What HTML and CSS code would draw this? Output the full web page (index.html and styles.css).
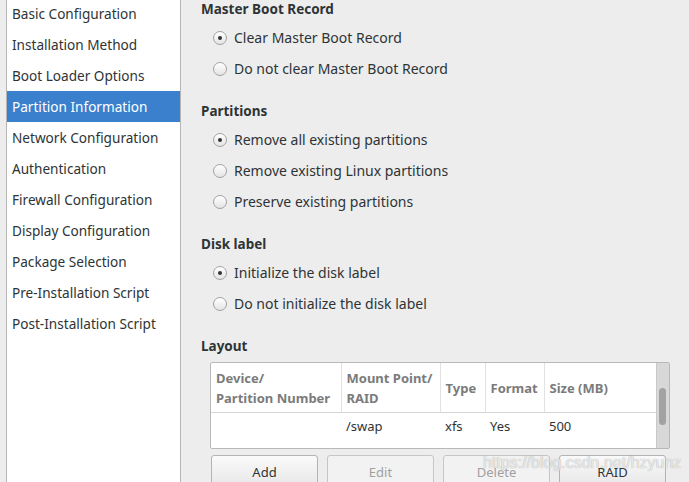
FILE: index.html
```html
<!DOCTYPE html>
<html>
<head>
<meta charset="utf-8">
<link rel="stylesheet" href="styles.css">
</head>
<body>
<div class="app">
  <nav class="sidebar">
    <ul class="nav-list">
      <li class="nav-item">Basic Configuration</li>
      <li class="nav-item">Installation Method</li>
      <li class="nav-item">Boot Loader Options</li>
      <li class="nav-item selected">Partition Information</li>
      <li class="nav-item">Network Configuration</li>
      <li class="nav-item">Authentication</li>
      <li class="nav-item">Firewall Configuration</li>
      <li class="nav-item">Display Configuration</li>
      <li class="nav-item">Package Selection</li>
      <li class="nav-item">Pre-Installation Script</li>
      <li class="nav-item">Post-Installation Script</li>
    </ul>
  </nav>
  <main class="content">
    <section class="group">
      <h2 class="group-title">Master Boot Record</h2>
      <div class="option"><span class="radio checked"></span>Clear Master Boot Record</div>
      <div class="option"><span class="radio"></span>Do not clear Master Boot Record</div>
    </section>
    <section class="group">
      <h2 class="group-title">Partitions</h2>
      <div class="option"><span class="radio checked"></span>Remove all existing partitions</div>
      <div class="option"><span class="radio"></span>Remove existing Linux partitions</div>
      <div class="option"><span class="radio"></span>Preserve existing partitions</div>
    </section>
    <section class="group">
      <h2 class="group-title">Disk label</h2>
      <div class="option"><span class="radio checked"></span>Initialize the disk label</div>
      <div class="option"><span class="radio"></span>Do not initialize the disk label</div>
    </section>
    <section class="group layout">
      <h2 class="group-title">Layout</h2>
      <div class="table-box">
        <div class="table-scroll">
          <table class="parts">
            <colgroup>
              <col class="c1"><col class="c2"><col class="c3"><col class="c4"><col class="c5">
            </colgroup>
            <thead>
              <tr>
                <th>Device/<br>Partition Number</th>
                <th>Mount Point/<br>RAID</th>
                <th>Type</th>
                <th>Format</th>
                <th>Size (MB)</th>
              </tr>
            </thead>
            <tbody>
              <tr>
                <td></td>
                <td>/swap</td>
                <td>xfs</td>
                <td>Yes</td>
                <td>500</td>
              </tr>
            </tbody>
          </table>
        </div>
        <div class="scrollbar"><div class="thumb"></div></div>
      </div>
      <div class="buttons">
        <button class="btn">Add</button>
        <button class="btn" disabled>Edit</button>
        <button class="btn" disabled>Delete</button>
        <button class="btn">RAID</button>
      </div>
      <div class="watermark">https://blog.csdn.net/hzyunz</div>
    </section>
  </main>
</div>
</body>
</html>
```

FILE: styles.css
```css
* { box-sizing: border-box; }

html, body {
  margin: 0;
  padding: 0;
  height: 100%;
  overflow: hidden;
}

body {
  background: #ededed;
  font-family: "Noto Sans", "DejaVu Sans", sans-serif;
  font-size: 13px;
  color: #2e3436;
}

.app {
  display: flex;
  height: 482px;
  overflow: hidden;
}

.sidebar {
  margin-left: 6px;
  width: 175px;
  flex: none;
  background: #ffffff;
  border-left: 1px solid #b6b6b6;
  border-right: 1px solid #b6b6b6;
  overflow: hidden;
}

.nav-list {
  list-style: none;
  margin: -2px 0 0 0;
  padding: 0;
}

.nav-item {
  height: 31px;
  line-height: 31px;
  padding-left: 5px;
  font-size: 13.6px;
  white-space: nowrap;
}

.nav-item.selected {
  background: #3a80cc;
  color: #ffffff;
}

.content {
  flex: 1;
  padding-left: 20px;
  overflow: hidden;
}

.group {
  margin-bottom: 18px;
}

.group-title {
  margin: 0 0 4px 0;
  height: 18px;
  line-height: 18px;
  font-size: 13.5px;
  font-weight: bold;
}

.option {
  display: flex;
  align-items: center;
  height: 31px;
  padding-left: 12px;
  font-size: 14px;
}

.radio {
  width: 14px;
  height: 14px;
  border-radius: 50%;
  border: 1px solid #a2a2a2;
  background: linear-gradient(#ffffff, #e4e4e4);
  margin-right: 7px;
  position: relative;
  flex: none;
}

.radio.checked::after {
  content: "";
  position: absolute;
  left: 4px;
  top: 4px;
  width: 4px;
  height: 4px;
  border-radius: 50%;
  background: #2e3436;
}

.layout {
  margin-bottom: 0;
  position: relative;
}

.layout .group-title {
  margin-bottom: 7px;
}

.table-box {
  margin-left: 9px;
  width: 460px;
  height: 87px;
  border: 1px solid #b8b8b8;
  border-radius: 2px;
  background: #ffffff;
  display: flex;
  overflow: hidden;
}

.table-scroll {
  flex: 1;
  overflow: hidden;
}

.parts {
  border-collapse: collapse;
  table-layout: fixed;
  width: 445px;
}

.c1 { width: 130px; }
.c2 { width: 99px; }
.c3 { width: 45px; }
.c4 { width: 59px; }
.c5 { width: 112px; }

.parts th {
  height: 49px;
  padding: 5px 5px 4px 5px;
  line-height: 20px;
  text-align: left;
  vertical-align: middle;
  font-weight: bold;
  color: #7b7b7b;
  border-right: 1px solid #e2e2e2;
  border-bottom: 1px solid #d6d6d6;
  white-space: nowrap;
  overflow: hidden;
}

.parts th:last-child {
  border-right: none;
}

.parts td {
  height: 36px;
  padding: 3px 5px 0 5px;
  line-height: 20px;
  vertical-align: top;
  white-space: nowrap;
}

.scrollbar {
  width: 13px;
  flex: none;
  background: #d8d8d8;
  border-left: 1px solid #c9c9c9;
  padding-top: 25px;
  padding-left: 2px;
}

.thumb {
  width: 7px;
  height: 37px;
  border-radius: 4px;
  background: #a2a2a2;
}

.buttons {
  display: flex;
  gap: 9px;
  margin-top: 6px;
  margin-left: 10px;
}

.btn {
  width: 107px;
  height: 34px;
  flex: none;
  font-family: "Noto Sans", "DejaVu Sans", sans-serif;
  font-size: 13px;
  color: #2e3436;
  border: 1px solid #b4b4b4;
  border-radius: 3px;
  background: linear-gradient(#fafafa, #e6e6e6);
  padding: 0;
}

.btn:disabled {
  color: #a0a0a0;
  background: #f2f2f2;
  border-color: #c6c6c6;
}

.watermark {
  position: absolute;
  left: 282px;
  top: 117px;
  font-family: "Liberation Sans", sans-serif;
  font-size: 16px;
  line-height: 18px;
  color: rgba(255, 255, 255, 0.75);
  text-shadow: 0 0 1px rgba(110, 110, 110, 0.7);
  white-space: nowrap;
  pointer-events: none;
}
```
